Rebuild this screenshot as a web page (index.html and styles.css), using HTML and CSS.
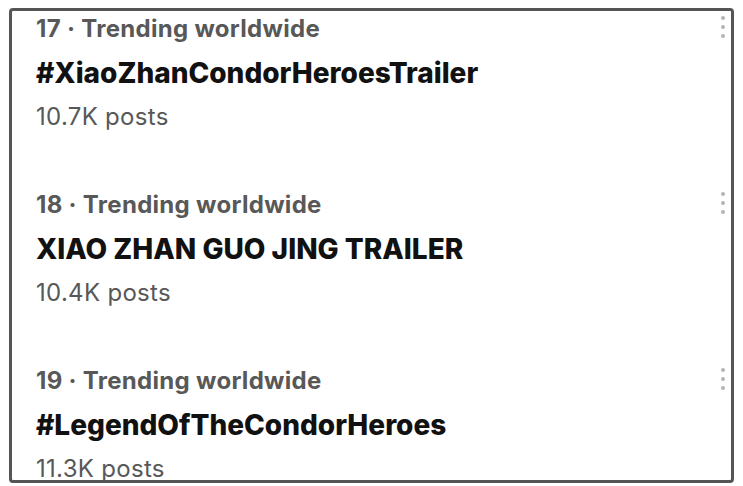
FILE: index.html
```html
<!DOCTYPE html>
<html lang="en">
<head>
  <meta charset="UTF-8">
  <meta name="viewport" content="width=device-width, initial-scale=1.0">
  <title>Trending</title>
  <link rel="stylesheet" href="styles.css">
</head>
<body>
  <div class="panel">
    <div class="trend">
      <div class="trend-meta">
        <span>17 · Trending worldwide</span>
        <svg class="more" width="6" height="24" viewBox="0 0 6 24"><circle cx="3" cy="3" r="2"/><circle cx="3" cy="12" r="2"/><circle cx="3" cy="21" r="2"/></svg>
      </div>
      <div class="trend-title">#XiaoZhanCondorHeroesTrailer</div>
      <div class="trend-count">10.7K posts</div>
    </div>

    <div class="trend">
      <div class="trend-meta">
        <span>18 · Trending worldwide</span>
        <svg class="more" width="6" height="24" viewBox="0 0 6 24"><circle cx="3" cy="3" r="2"/><circle cx="3" cy="12" r="2"/><circle cx="3" cy="21" r="2"/></svg>
      </div>
      <div class="trend-title">XIAO ZHAN GUO JING TRAILER</div>
      <div class="trend-count">10.4K posts</div>
    </div>

    <div class="trend">
      <div class="trend-meta">
        <span>19 · Trending worldwide</span>
        <svg class="more" width="6" height="24" viewBox="0 0 6 24"><circle cx="3" cy="3" r="2"/><circle cx="3" cy="12" r="2"/><circle cx="3" cy="21" r="2"/></svg>
      </div>
      <div class="trend-title">#LegendOfTheCondorHeroes</div>
      <div class="trend-count">11.3K posts</div>
    </div>
  </div>
</body>
</html>
```

FILE: styles.css
```css
body {
  margin: 0;
  background: #ffffff;
  font-family: Inter, "Noto Sans", sans-serif;
}

.panel {
  margin: 8px 0 0 9px;
  width: 725px;
  height: 475px;
  border: 3px solid #555555;
  border-radius: 4px;
  padding: 1px 0 0 24px;
  box-sizing: border-box;
  display: flex;
  flex-direction: column;
  gap: 54px;
}

.trend-meta {
  display: flex;
  justify-content: space-between;
  align-items: flex-start;
  height: 34px;
  line-height: 34px;
  font-size: 24px;
  font-weight: 700;
  letter-spacing: 0.3px;
  color: #585858;
}

.more {
  margin: 3px 5px 0 0;
  fill: #b4b4b4;
}

.trend-title {
  line-height: 54px;
  font-size: 28px;
  font-weight: 800;
  color: #111111;
}

.trend-count {
  line-height: 34px;
  font-size: 24px;
  letter-spacing: 0.3px;
  color: #585858;
}
```
